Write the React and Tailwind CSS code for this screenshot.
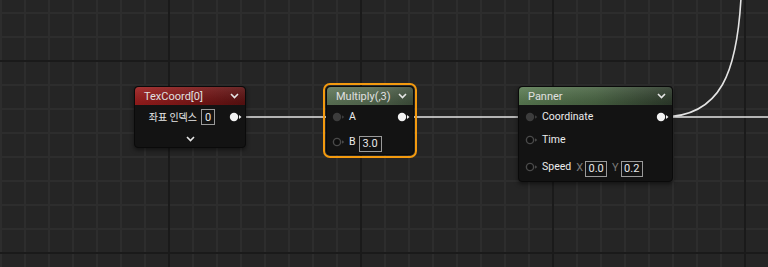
import React from "react";

const W = 768;
const H = 267;

function Grid() {
  const vx = [];
  for (let x = 1; x < W; x += 24) vx.push(x);
  const hy = [];
  for (let y = 13; y < H; y += 24) hy.push(y);
  const majorX = (x) => (x - 169) % 192 === 0;
  const majorY = (y) => (y - 61) % 192 === 0;
  return (
    <svg className="absolute inset-0" width={W} height={H}>
      <rect width={W} height={H} fill="#252525" />
      {vx.filter((x) => !majorX(x)).map((x) => (
        <rect key={"v" + x} x={x - 1} y={0} width={2} height={H} fill="#2d2d2d" />
      ))}
      {hy.filter((y) => !majorY(y)).map((y) => (
        <rect key={"h" + y} x={0} y={y - 1} width={W} height={2} fill="#2d2d2d" />
      ))}
      {vx.filter(majorX).map((x) => (
        <rect key={"V" + x} x={x - 1} y={0} width={2} height={H} fill="#1a1a1a" />
      ))}
      {hy.filter(majorY).map((y) => (
        <rect key={"H" + y} x={0} y={y - 1} width={W} height={2} fill="#1a1a1a" />
      ))}
      <g stroke="#e4e4e4" strokeWidth="1.6" fill="none">
        <line x1="238" y1="117" x2="335" y2="117" />
        <line x1="404" y1="117" x2="526" y2="117" />
        <line x1="662" y1="117" x2="768" y2="117" />
        <path d="M 662 117 C 722 117, 737 70, 741 -2" />
      </g>
    </svg>
  );
}

function Chevron() {
  return (
    <svg width="9" height="6" viewBox="0 0 9 6">
      <path d="M1 1 L4.5 4.5 L8 1" stroke="#e6e6e6" strokeWidth="1.6" fill="none" />
    </svg>
  );
}

function OutPin() {
  return (
    <svg width="14" height="10" viewBox="0 0 14 10">
      <circle cx="5" cy="5" r="4.2" fill="#f2f2f2" />
      <path d="M10 3 L12.5 5 L10 7 Z" fill="#f2f2f2" />
    </svg>
  );
}

function InPin({ connected }) {
  return (
    <svg width="14" height="10" viewBox="0 0 14 10">
      {connected ? (
        <circle cx="5" cy="5" r="4.2" fill="#3c3c3c" />
      ) : (
        <circle cx="5" cy="5" r="3.6" fill="#0e0e0e" stroke="#4a4a4a" strokeWidth="1.4" />
      )}
      <path d="M10 3.2 L12.3 5 L10 6.8 Z" fill={connected ? "#3c3c3c" : "#4a4a4a"} />
    </svg>
  );
}

function Box({ children, w }) {
  return (
    <span className={`inline-flex h-[16px] ${w} items-center justify-center border border-[#9a9a9a] text-[11px] leading-none text-[#e8e8e8]`}>
      {children}
    </span>
  );
}

function Label({ children, cls = "" }) {
  return <span className={`text-[10.5px] leading-none text-[#ececec] ${cls}`}>{children}</span>;
}

function Header({ title, cls }) {
  return (
    <div className={`relative flex h-[18px] items-center justify-between overflow-hidden rounded-t-[4px] pl-[9px] pr-[6px] ${cls}`}>
      <div className="absolute inset-0 bg-gradient-to-b from-white/10 to-black/10" />
      <span className="relative text-[11px] leading-none text-[#e0e0e0]">{title}</span>
      <span className="relative flex">
        <Chevron />
      </span>
    </div>
  );
}

export default function App() {
  return (
    <div
      className="relative overflow-hidden"
      style={{ width: W, height: H, fontFamily: "Roboto, 'Liberation Sans', sans-serif" }}
    >
      <Grid />

      {/* TexCoord */}
      <div className="absolute left-[134px] top-[86px] flex h-[62px] w-[112px] flex-col rounded-[4px] border border-[#0a0a0a] bg-[#131313] shadow-[0_2px_4px_rgba(0,0,0,0.5)]">
        <Header title="TexCoord[0]" cls="bg-gradient-to-r from-[#9b1d1d] via-[#7e1717] to-[#5a1111]" />
        <div className="flex h-[22px] items-center justify-end gap-[4px] pr-[2px] pt-[2px]">
          <span className="text-[10px] leading-none text-[#e6e6e6]" style={{ fontFamily: "'Noto Sans CJK KR', sans-serif" }}>
            좌표 인덱스
          </span>
          <Box w="w-[14px]">0</Box>
          <span className="ml-[10px]">
            <OutPin />
          </span>
        </div>
        <div className="flex flex-1 items-center justify-center pt-[4px]">
          <Chevron />
        </div>
      </div>

      {/* Multiply */}
      <div className="absolute left-[326px] top-[86px] flex h-[69px] w-[88px] flex-col rounded-[4px] border border-[#0a0a0a] bg-[#131313] outline-2 outline-offset-1 outline-[#f39a0f]">
        <Header title="Multiply(,3)" cls="bg-gradient-to-r from-[#5f7759] via-[#566b51] to-[#3e4e3b]" />
        <div className="flex h-[22px] items-center justify-between pl-[5px] pr-[2px] pt-[2px]">
          <div className="flex items-center gap-[3px]">
            <InPin connected />
            <Label>A</Label>
          </div>
          <OutPin />
        </div>
        <div className="flex h-[26px] items-center pl-[5px] pt-[4px]">
          <InPin />
          <Label cls="ml-[3px]">B</Label>
          <span className="ml-[3px]">
            <Box w="w-[23px]">3.0</Box>
          </span>
        </div>
      </div>

      {/* Panner */}
      <div className="absolute left-[518px] top-[86px] flex h-[96px] w-[155px] flex-col rounded-[4px] border border-[#0a0a0a] bg-[#131313] shadow-[0_2px_4px_rgba(0,0,0,0.5)]">
        <Header title="Panner" cls="bg-gradient-to-r from-[#5b7c53] via-[#4a6544] to-[#2d3a2b]" />
        <div className="flex h-[22px] items-center justify-between pl-[6px] pr-[2px] pt-[2px]">
          <div className="flex items-center gap-[3px]">
            <InPin connected />
            <Label>Coordinate</Label>
          </div>
          <OutPin />
        </div>
        <div className="flex h-[26px] items-center gap-[3px] pl-[6px]">
          <InPin />
          <Label>Time</Label>
        </div>
        <div className="flex h-[28px] items-center pl-[6px]">
          <InPin />
          <Label cls="ml-[3px]">Speed</Label>
          <span className="ml-[5px] text-[11px] leading-none text-[#7a7a7a]">X</span>
          <span className="ml-[2px]">
            <Box w="w-[22px]">0.0</Box>
          </span>
          <span className="ml-[5px] text-[11px] leading-none text-[#7a7a7a]">Y</span>
          <span className="ml-[2px]">
            <Box w="w-[22px]">0.2</Box>
          </span>
        </div>
      </div>
    </div>
  );
}
